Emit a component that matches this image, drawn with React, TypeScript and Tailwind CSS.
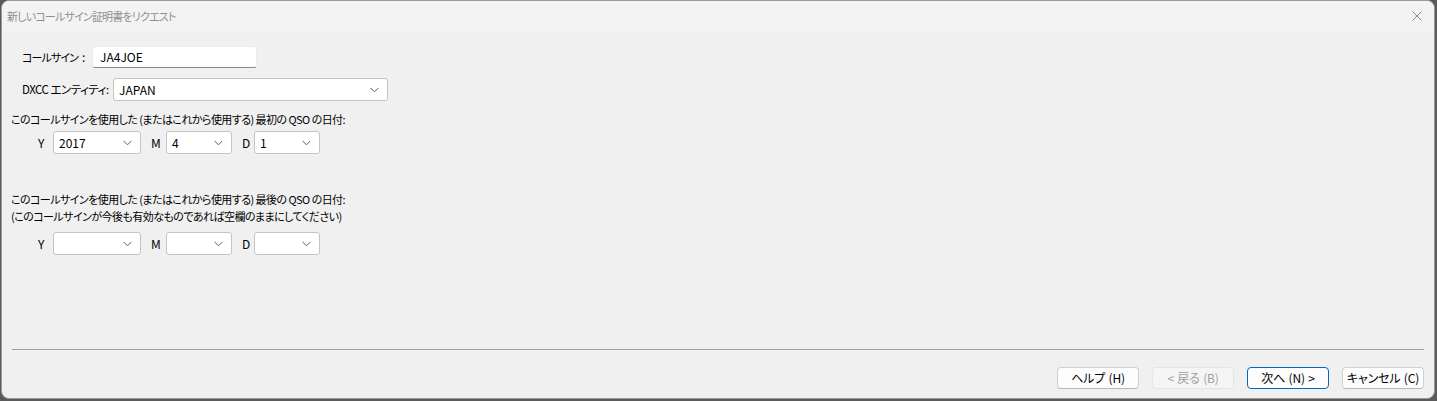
import React from 'react'

const font = "font-['Noto_Sans_CJK_JP','Noto_Sans',sans-serif] [font-feature-settings:'palt']"

function Chevron() {
  return (
    <svg width="9" height="6" viewBox="0 0 9 6" className="shrink-0">
      <path d="M0.5 0.8 L4.5 4.8 L8.5 0.8" fill="none" stroke="#606060" strokeWidth="1" />
    </svg>
  )
}

function Combo({ value, width }: { value?: string; width: string }) {
  return (
    <div
      className={`${width} h-[23px] shrink-0 flex items-center justify-between bg-white border border-[#c4c4c4] rounded-[3px] pl-[5px] pr-[8px]`}
    >
      <span className="text-[12px] text-black leading-none tracking-normal">{value}</span>
      <Chevron />
    </div>
  )
}

function DateRow({ y, m, d }: { y?: string; m?: string; d?: string }) {
  return (
    <div className="flex items-center pl-[36px] text-[12px] tracking-normal">
      <span className="w-[15px] shrink-0">Y</span>
      <Combo value={y} width="w-[88px]" />
      <span className="ml-[10px] w-[15px] shrink-0">M</span>
      <Combo value={m} width="w-[66px]" />
      <span className="ml-[10px] w-[12px] shrink-0">D</span>
      <Combo value={d} width="w-[66px]" />
    </div>
  )
}

function Btn({ label, kind }: { label: string; kind?: 'default' | 'disabled' }) {
  const cls =
    kind === 'default'
      ? 'bg-[#fdfdfd] border-[#0067c0] text-black'
      : kind === 'disabled'
        ? 'bg-[#f5f5f5] border-[#e5e5e5] text-[#a0a0a0]'
        : 'bg-[#fdfdfd] border-[#d0d0d0] border-b-[#b8b8b8] text-black'
  return (
    <div
      className={`w-[82px] h-[22px] border rounded-[4px] flex items-center justify-center text-[12px] tracking-[-0.2px] [word-spacing:1px] whitespace-nowrap ${cls}`}
    >
      {label}
    </div>
  )
}

export default function App() {
  return (
    <div className={`w-[1437px] h-[401px] bg-[#5a5a5a] ${font}`}>
      <div className="ml-px w-[1434px] h-[399px] flex flex-col bg-[#f0f0f0] border border-[#9a9a9a] rounded-[8px] overflow-hidden text-black">
        {/* タイトルバー */}
        <div className="h-[30px] shrink-0 bg-[#f3f3f3] flex items-center justify-between pl-[5px] pr-[10px]">
          <span className="text-[11px] tracking-[-0.8px] text-[#8f8f8f] whitespace-nowrap">
            新しいコールサイン証明書をリクエスト
          </span>
          <svg width="10" height="10" viewBox="0 0 10 10" className="mr-[2px]">
            <path d="M0.5 0.5 L9.5 9.5 M9.5 0.5 L0.5 9.5" stroke="#8a8a8a" strokeWidth="1" />
          </svg>
        </div>

        {/* 本文 */}
        <div className="flex-1 flex flex-col text-[11px] tracking-[-0.5px] whitespace-nowrap">
          <div className="flex items-center mt-[15px] pl-[20px]">
            <span className="w-[70px] shrink-0 flex items-center">
              <span className="tracking-[-0.9px]">コールサイン</span>
              <span className="ml-[4px] text-[12px]">:</span>
            </span>
            <div className="w-[165px] h-[22px] shrink-0 bg-white border border-[#ececec] border-b-[#8a8a8a] rounded-[3px] flex items-center pl-[7px] text-[12px] tracking-normal">
              JA4JOE
            </div>
          </div>

          <div className="flex items-center mt-[10px] pl-[20px]">
            <span className="w-[91px] shrink-0 text-[11.5px]">DXCC エンティティ:</span>
            <Combo value="JAPAN" width="w-[275px]" />
          </div>

          <div className="mt-[10px] pl-[9px] leading-[17px] tracking-[-0.55px]">
            このコールサインを使用した (またはこれから使用する) 最初の QSO の日付:
          </div>
          <div className="mt-[3px]">
            <DateRow y="2017" m="4" d="1" />
          </div>

          <div className="mt-[37px] pl-[9px] leading-[17px] tracking-[-0.55px]">
            <div>このコールサインを使用した (またはこれから使用する) 最後の QSO の日付:</div>
            <div>(このコールサインが今後も有効なものであれば空欄のままにしてください)</div>
          </div>
          <div className="mt-[7px]">
            <DateRow />
          </div>

          <div className="flex-1" />
          <div className="mx-[10px] h-px bg-[#a0a0a0]" />
          <div className="flex justify-end gap-[13px] pr-[10px] mt-[17px] mb-[9px]">
            <Btn label="ヘルプ (H)" />
            <Btn label="< 戻る (B)" kind="disabled" />
            <Btn label="次へ (N) >" kind="default" />
            <Btn label="キャンセル (C)" />
          </div>
        </div>
      </div>
    </div>
  )
}
